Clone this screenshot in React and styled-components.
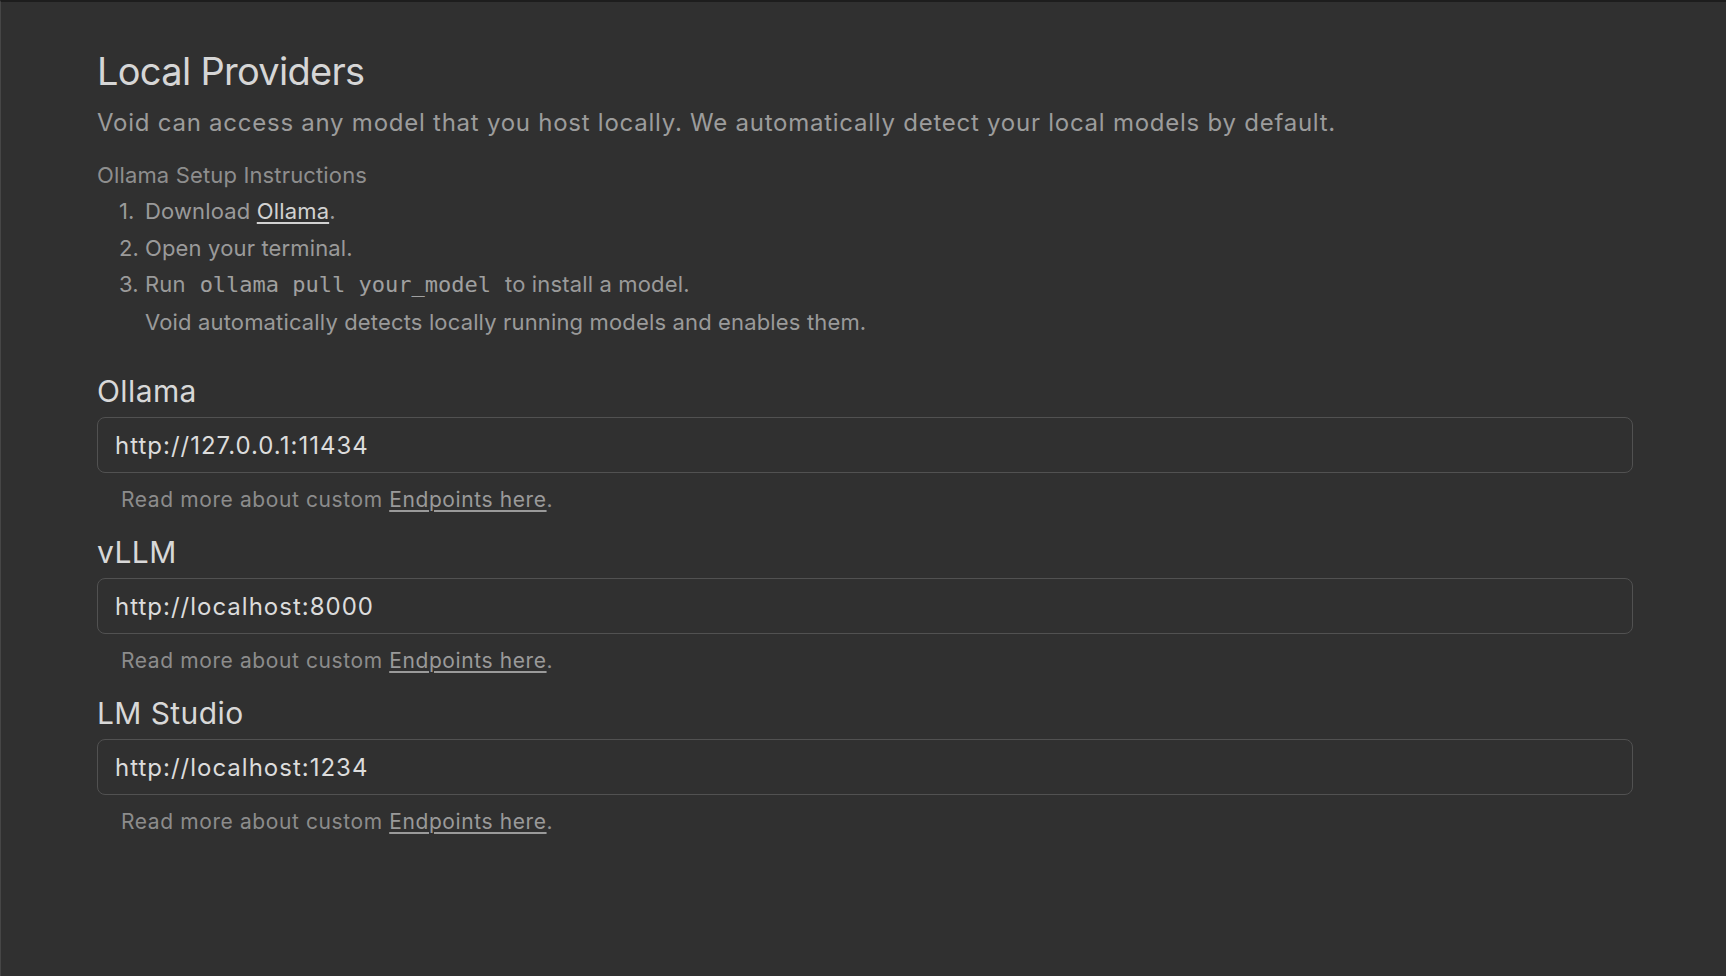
import React from "react";
import styled, { createGlobalStyle } from "styled-components";

const GlobalStyle = createGlobalStyle`
  html, body {
    margin: 0;
    padding: 0;
    background: #303030;
  }
  body {
    font-family: Inter, "Noto Sans", "Liberation Sans", sans-serif;
    -webkit-font-smoothing: antialiased;
  }
  * { box-sizing: border-box; }
`;

const Page = styled.div`
  min-height: 100vh;
  background: #303030;
  border-top: 2px solid #1d1d1d;
  border-left: 1px solid #464646;
  padding: 46px 93px 60px 96px;
`;

const Content = styled.div`
  width: 1536px;
  display: flex;
  flex-direction: column;
`;

const Title = styled.h1`
  margin: 0;
  font-size: 38px;
  line-height: 46px;
  font-weight: 400;
  letter-spacing: -0.7px;
  color: #d6d6d6;
`;

const Lead = styled.p`
  margin: 13px 0 0;
  font-size: 24px;
  line-height: 32px;
  color: #9c9c9c;
  letter-spacing: 0.75px;
`;

const Setup = styled.div`
  margin-top: 18px;
  font-size: 22px;
  color: #8e8e8e;
  letter-spacing: 0.15px;
`;

const SetupHeader = styled.div`
  line-height: 36px;
`;

const Steps = styled.ol`
  list-style: none;
  margin: 0;
  padding: 0 0 0 22px;
  color: #9a9a9a;
`;

const Step = styled.li`
  display: flex;
  line-height: 36.6px;
`;

const StepNumber = styled.span`
  width: 26px;
  flex-shrink: 0;
`;

const StepBody = styled.div`
  display: flex;
  flex-direction: column;
`;

const Link = styled.a`
  color: ${(p) => (p.$bright ? "#d2d2d2" : "#9a9a9a")};
  text-decoration: underline;
  text-underline-offset: 3px;
  text-decoration-thickness: 1.5px;
  cursor: pointer;
`;

const Code = styled.code`
  font-family: "DejaVu Sans Mono", "Liberation Mono", monospace;
  font-size: 22px;
  letter-spacing: 0;
  color: #a0a0a0;
  padding: 0 14px;
`;

const Providers = styled.div`
  margin-top: 33px;
  display: flex;
  flex-direction: column;
  gap: 20px;
`;

const Provider = styled.section`
  display: flex;
  flex-direction: column;
`;

const ProviderName = styled.h2`
  margin: 0;
  font-size: 30px;
  line-height: 36px;
  font-weight: 400;
  letter-spacing: 0.4px;
  color: #d8d8d8;
`;

const EndpointInput = styled.input`
  margin-top: 8px;
  width: 100%;
  height: 56px;
  padding: 0 17px;
  background: #303030;
  border: 1.5px solid #515151;
  border-radius: 8px;
  color: #dcdcdc;
  font-family: Inter, "Noto Sans", sans-serif;
  font-size: 24px;
  letter-spacing: 1px;
  outline: none;
`;

const Helper = styled.p`
  margin: 13px 0 0;
  padding-left: 24px;
  font-size: 21px;
  line-height: 28px;
  letter-spacing: 0.6px;
  color: #8c8c8c;
`;

const providers = [
  { name: "Ollama", endpoint: "http://127.0.0.1:11434" },
  { name: "vLLM", endpoint: "http://localhost:8000" },
  { name: "LM Studio", endpoint: "http://localhost:1234" },
];

export default function App() {
  return (
    <>
      <GlobalStyle />
      <Page>
        <Content>
          <Title>Local Providers</Title>
          <Lead>
            Void can access any model that you host locally. We automatically
            detect your local models by default.
          </Lead>

          <Setup>
            <SetupHeader>Ollama Setup Instructions</SetupHeader>
            <Steps>
              <Step>
                <StepNumber>1.</StepNumber>
                <StepBody>
                  <span>
                    Download <Link $bright>Ollama</Link>.
                  </span>
                </StepBody>
              </Step>
              <Step>
                <StepNumber>2.</StepNumber>
                <StepBody>
                  <span>Open your terminal.</span>
                </StepBody>
              </Step>
              <Step>
                <StepNumber>3.</StepNumber>
                <StepBody>
                  <span>
                    Run<Code>ollama pull your_model</Code>to install a model.
                  </span>
                  <span>
                    Void automatically detects locally running models and
                    enables them.
                  </span>
                </StepBody>
              </Step>
            </Steps>
          </Setup>

          <Providers>
            {providers.map((p) => (
              <Provider key={p.name}>
                <ProviderName>{p.name}</ProviderName>
                <EndpointInput defaultValue={p.endpoint} spellCheck={false} />
                <Helper>
                  Read more about custom <Link>Endpoints here</Link>.
                </Helper>
              </Provider>
            ))}
          </Providers>
        </Content>
      </Page>
    </>
  );
}
